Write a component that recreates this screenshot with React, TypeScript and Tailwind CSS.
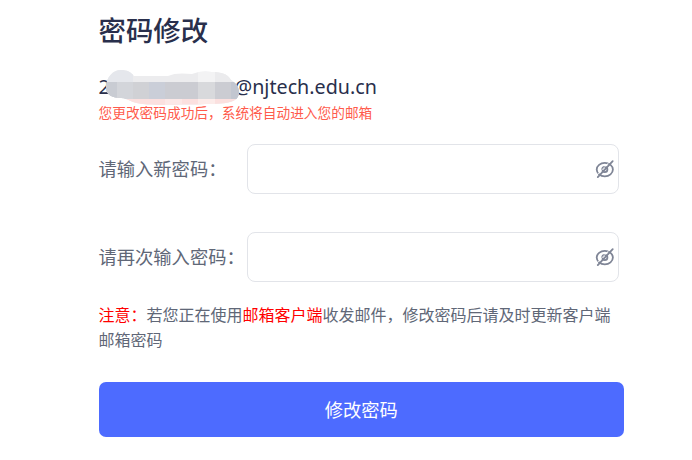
import type { ReactNode } from 'react';

const fields = [
  { id: 'password', label: '请输入新密码：' },
  { id: 'confirm', label: '请再次输入密码：' },
];

export default function App() {
  return (
    <main className="h-[460px] w-[692px] overflow-hidden bg-white pl-[98.5px] font-['Noto_Sans','Noto_Sans_CJK_SC',sans-serif] text-[#606777]">
      <h1 className="mt-[11px] h-10 text-[27.4px] leading-10 font-medium text-[#292f4c]">
        密码修改
      </h1>

      <div className="relative mt-[22px] h-7 text-[19.7px] leading-7 text-[#292f4c]">
        <span>2</span>
        <span className="absolute top-0 left-[136px]">@njtech.edu.cn</span>
        <AccountMask />
      </div>
      <p className="mt-px h-[22px] text-[13.7px] leading-[22px] text-[#ff5b4c]">
        您更改密码成功后，系统将自动进入您的邮箱
      </p>

      <form className="mt-5">
        <div className="flex flex-col gap-[38px]">
          {fields.map((field) => (
            <PasswordField key={field.id} id={field.id}>
              {field.label}
            </PasswordField>
          ))}
        </div>

        <p className="mt-[21px] w-[520px] text-[16px] leading-[25px]">
          <span className="text-[#ff0000]">注意：</span>
          若您正在使用
          <span className="text-[#ff0000]">邮箱客户端</span>
          收发邮件，修改密码后请及时更新客户端邮箱密码
        </p>

        <button
          type="button"
          className="mt-[29px] block h-[55px] w-[525.5px] rounded-[7px] bg-[#4d6bff] text-[18.3px] text-white"
        >
          修改密码
        </button>
      </form>
    </main>
  );
}

function PasswordField({ id, children }: { id: string; children: ReactNode }) {
  return (
    <div className="flex h-[50px] items-center">
      <label htmlFor={id} className="w-[148.5px] shrink-0 text-[18.3px] whitespace-nowrap">
        {children}
      </label>
      <div className="flex h-full w-[372px] items-center rounded-[8px] border border-[#e2e4e9] pr-[3px]">
        <input id={id} type="password" className="h-full min-w-0 flex-1 outline-none" />
        <EyeOff />
      </div>
    </div>
  );
}

function EyeOff() {
  return (
    <svg width="20" height="20" viewBox="0 0 20 20" fill="none" stroke="#7f8596" strokeWidth="1.8">
      <ellipse cx="9.8" cy="10.6" rx="8.1" ry="6.7" />
      <circle cx="9.8" cy="10.6" r="2.6" />
      <path d="M16.4 0.8 1.5 16.6" stroke="#fff" strokeWidth="0.8" />
      <path d="M17.7 2.2 2.8 18.1" strokeLinecap="round" />
    </svg>
  );
}

// Pixelated smear that hides the account name
function AccountMask() {
  return (
    <svg
      className="absolute -top-[4px] left-[7px]"
      width="134"
      height="40"
      viewBox="0 0 134 40"
    >
      <defs>
        <clipPath id="smear">
          <path d="M0 19C0 8 7 1 15 1c6 0 10 2 13 6h34c6-3 15-3 24-2 7-3 14-3 20-2 9 0 16 2 19 8 5 3 8 7 8 12 0 6-4 9-9 10-7 2-18 2-25 2-10 1-24 0-36 1-13 0-27 0-36-3-5-2-8-4-12-4C7 29 0 26 0 19Z" />
        </clipPath>
      </defs>
      <g clipPath="url(#smear)">
        <rect width="134" height="40" fill="#ececee" />
        <rect width="27" height="13" fill="#e5e7ec" />
        <rect x="92" width="17" height="13" fill="#f3f3f4" />
        <rect x="109" width="25" height="13" fill="#ebebed" />
        <rect y="13" width="134" height="17" fill="#cbccd2" />
        <rect y="13" width="11" height="17" fill="#c9ccd3" />
        <rect x="11" y="13" width="16" height="17" fill="#d3d5da" />
        <rect x="27" y="13" width="16" height="17" fill="#d0d1d5" />
        <rect x="43" y="13" width="16" height="17" fill="#caced8" />
        <rect x="92" y="13" width="17" height="17" fill="#d8d9dc" />
        <rect x="125" y="13" width="9" height="17" fill="#c2c6d0" />
        <rect y="30" width="134" height="10" fill="#fbe0df" />
        <rect x="59" y="30" width="17" height="10" fill="#fce8e7" />
        <rect x="92" y="30" width="17" height="10" fill="#fcecea" />
      </g>
    </svg>
  );
}
